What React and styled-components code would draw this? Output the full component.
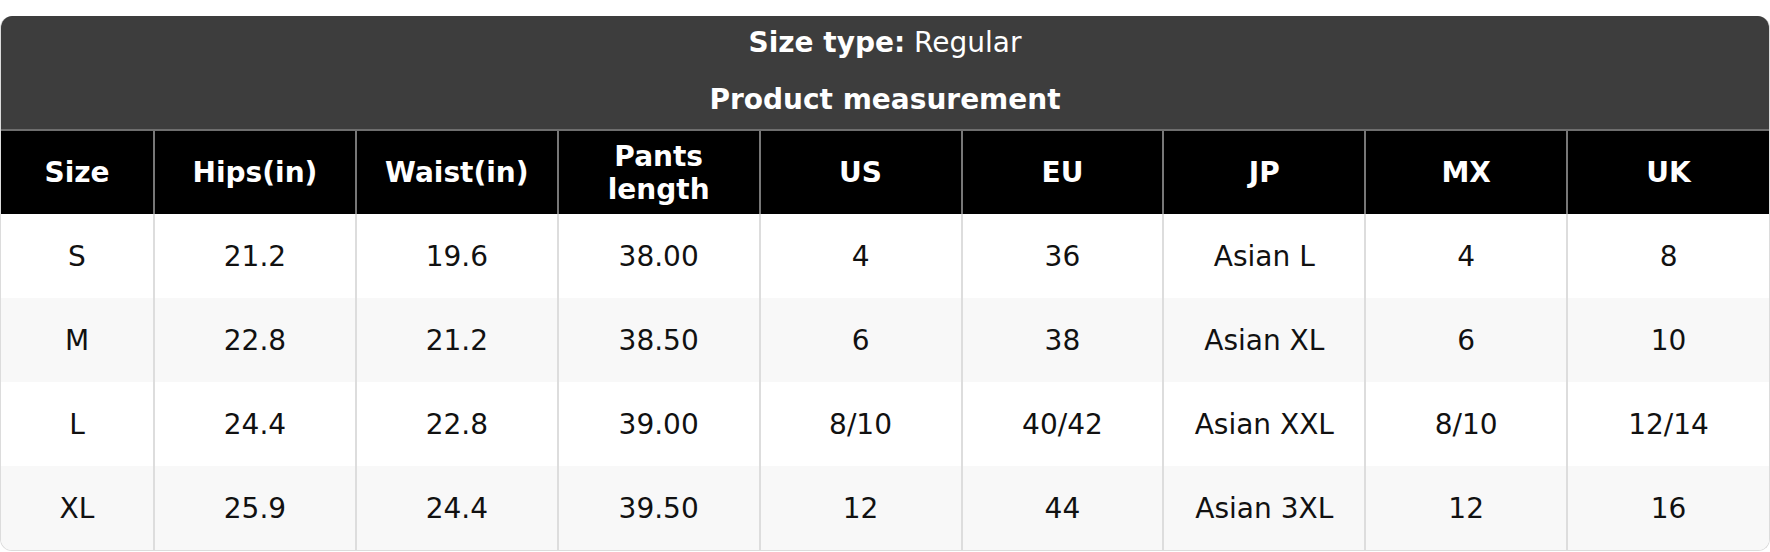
import React from 'react';
import styled, { createGlobalStyle } from 'styled-components';

const GlobalStyle = createGlobalStyle`
  html, body {
    margin: 0;
    padding: 0;
    background: #fff;
  }
  body {
    font-family: "DejaVu Sans", Verdana, sans-serif;
  }
`;

const Wrapper = styled.div`
  margin-top: 16px;
  border-radius: 12px;
  overflow: hidden;
  border: 1px solid #dcdcdc;
  border-top: none;
  background: #fff;
`;

const Caption = styled.div`
  background: #3d3d3d;
  color: #fff;
  font-size: 28px;
  text-align: center;
  display: flex;
  flex-direction: column;
  gap: 24px;
  padding: 10px 0 13px;
  border-bottom: 2px solid #6e6e6e;

  b {
    font-weight: bold;
  }
`;

const Line = styled.div`
  font-weight: ${(p) => (p.$bold ? 'bold' : 'normal')};
`;

const Table = styled.table`
  width: 100%;
  border-collapse: collapse;
  table-layout: fixed;
  font-size: 28px;
`;

const HeadCell = styled.th`
  background: #000;
  color: #fff;
  font-weight: bold;
  height: 83px;
  padding: 0 16px;
  text-align: center;
  vertical-align: middle;
  border-left: 2px solid #777;
  &:first-child {
    border-left: none;
  }
`;

const Row = styled.tr`
  background: ${(p) => (p.$alt ? '#f8f8f8' : '#fff')};
`;

const Cell = styled.td`
  color: #111;
  height: 84px;
  padding: 0 8px;
  text-align: center;
  vertical-align: middle;
  border-left: 2px solid #dddddd;
  &:first-child {
    border-left: none;
  }
`;

const headers = ['Size', 'Hips(in)', 'Waist(in)', 'Pants length', 'US', 'EU', 'JP', 'MX', 'UK'];

const rows = [
  ['S', '21.2', '19.6', '38.00', '4', '36', 'Asian L', '4', '8'],
  ['M', '22.8', '21.2', '38.50', '6', '38', 'Asian XL', '6', '10'],
  ['L', '24.4', '22.8', '39.00', '8/10', '40/42', 'Asian XXL', '8/10', '12/14'],
  ['XL', '25.9', '24.4', '39.50', '12', '44', 'Asian 3XL', '12', '16'],
];

export default function App() {
  return (
    <>
      <GlobalStyle />
      <Wrapper>
        <Caption>
          <Line>
            <b>Size type:</b> Regular
          </Line>
          <Line $bold>Product measurement</Line>
        </Caption>
        <Table>
          <colgroup>
            <col style={{ width: '153px' }} />
            {headers.slice(1).map((h) => (
              <col key={h} />
            ))}
          </colgroup>
          <thead>
            <tr>
              {headers.map((h) => (
                <HeadCell key={h}>{h}</HeadCell>
              ))}
            </tr>
          </thead>
          <tbody>
            {rows.map((r, i) => (
              <Row key={r[0]} $alt={i % 2 === 1}>
                {r.map((c, j) => (
                  <Cell key={j}>{c}</Cell>
                ))}
              </Row>
            ))}
          </tbody>
        </Table>
      </Wrapper>
    </>
  );
}
